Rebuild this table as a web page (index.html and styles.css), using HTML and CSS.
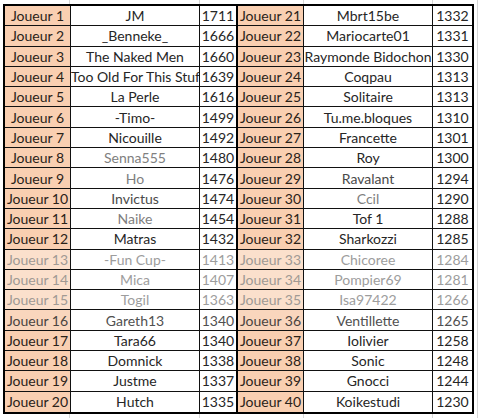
FILE: index.html
```html
<!DOCTYPE html>
<html lang="fr">
<head>
<meta charset="utf-8">
<title>Classement</title>
<link rel="stylesheet" href="styles.css">
</head>
<body>
<div class="page">
  <div class="sheet">
    <div class="block left">
      <div class="row"><div class="cell lbl">Joueur 1</div><div class="cell name">JM</div><div class="cell num">1711</div></div>
      <div class="row"><div class="cell lbl">Joueur 2</div><div class="cell name">_Benneke_</div><div class="cell num">1666</div></div>
      <div class="row"><div class="cell lbl">Joueur 3</div><div class="cell name">The Naked Men</div><div class="cell num">1660</div></div>
      <div class="row"><div class="cell lbl">Joueur 4</div><div class="cell name clip">Too Old For This Stuff</div><div class="cell num">1639</div></div>
      <div class="row"><div class="cell lbl">Joueur 5</div><div class="cell name">La Perle</div><div class="cell num">1616</div></div>
      <div class="row"><div class="cell lbl">Joueur 6</div><div class="cell name">-Timo-</div><div class="cell num">1499</div></div>
      <div class="row"><div class="cell lbl">Joueur 7</div><div class="cell name">Nicouille</div><div class="cell num">1492</div></div>
      <div class="row"><div class="cell lbl">Joueur 8</div><div class="cell name soft">Senna555</div><div class="cell num">1480</div></div>
      <div class="row"><div class="cell lbl">Joueur 9</div><div class="cell name soft">Ho</div><div class="cell num">1476</div></div>
      <div class="row"><div class="cell lbl">Joueur 10</div><div class="cell name mid">Invictus</div><div class="cell num">1474</div></div>
      <div class="row"><div class="cell lbl">Joueur 11</div><div class="cell name soft">Naike</div><div class="cell num">1454</div></div>
      <div class="row"><div class="cell lbl">Joueur 12</div><div class="cell name">Matras</div><div class="cell num">1432</div></div>
      <div class="row fade"><div class="cell lbl">Joueur 13</div><div class="cell name">-Fun Cup-</div><div class="cell num">1413</div></div>
      <div class="row fade"><div class="cell lbl">Joueur 14</div><div class="cell name">Mica</div><div class="cell num">1407</div></div>
      <div class="row fade"><div class="cell lbl">Joueur 15</div><div class="cell name">Togil</div><div class="cell num">1363</div></div>
      <div class="row dim"><div class="cell lbl">Joueur 16</div><div class="cell name">Gareth13</div><div class="cell num">1340</div></div>
      <div class="row"><div class="cell lbl">Joueur 17</div><div class="cell name">Tara66</div><div class="cell num">1340</div></div>
      <div class="row"><div class="cell lbl">Joueur 18</div><div class="cell name">Domnick</div><div class="cell num">1338</div></div>
      <div class="row"><div class="cell lbl">Joueur 19</div><div class="cell name">Justme</div><div class="cell num">1337</div></div>
      <div class="row"><div class="cell lbl">Joueur 20</div><div class="cell name">Hutch</div><div class="cell num">1335</div></div>
    </div>
    <div class="block right">
      <div class="row"><div class="cell lbl">Joueur 21</div><div class="cell name">Mbrt15be</div><div class="cell num">1332</div></div>
      <div class="row"><div class="cell lbl">Joueur 22</div><div class="cell name">Mariocarte01</div><div class="cell num">1331</div></div>
      <div class="row"><div class="cell lbl">Joueur 23</div><div class="cell name">Raymonde Bidochon</div><div class="cell num">1330</div></div>
      <div class="row"><div class="cell lbl">Joueur 24</div><div class="cell name">Coqpau</div><div class="cell num">1313</div></div>
      <div class="row"><div class="cell lbl">Joueur 25</div><div class="cell name">Solitaire</div><div class="cell num">1313</div></div>
      <div class="row"><div class="cell lbl">Joueur 26</div><div class="cell name">Tu.me.bloques</div><div class="cell num">1310</div></div>
      <div class="row"><div class="cell lbl">Joueur 27</div><div class="cell name">Francette</div><div class="cell num">1301</div></div>
      <div class="row"><div class="cell lbl">Joueur 28</div><div class="cell name">Roy</div><div class="cell num">1300</div></div>
      <div class="row"><div class="cell lbl">Joueur 29</div><div class="cell name mid">Ravalant</div><div class="cell num">1294</div></div>
      <div class="row"><div class="cell lbl">Joueur 30</div><div class="cell name soft">Ccil</div><div class="cell num">1290</div></div>
      <div class="row"><div class="cell lbl">Joueur 31</div><div class="cell name">Tof 1</div><div class="cell num">1288</div></div>
      <div class="row"><div class="cell lbl">Joueur 32</div><div class="cell name">Sharkozzi</div><div class="cell num">1285</div></div>
      <div class="row fade"><div class="cell lbl">Joueur 33</div><div class="cell name">Chicoree</div><div class="cell num">1284</div></div>
      <div class="row fade"><div class="cell lbl">Joueur 34</div><div class="cell name">Pompier69</div><div class="cell num">1281</div></div>
      <div class="row fade"><div class="cell lbl">Joueur 35</div><div class="cell name">Isa97422</div><div class="cell num">1266</div></div>
      <div class="row dim"><div class="cell lbl">Joueur 36</div><div class="cell name">Ventillette</div><div class="cell num">1265</div></div>
      <div class="row"><div class="cell lbl">Joueur 37</div><div class="cell name">Iolivier</div><div class="cell num">1258</div></div>
      <div class="row"><div class="cell lbl">Joueur 38</div><div class="cell name">Sonic</div><div class="cell num">1248</div></div>
      <div class="row"><div class="cell lbl">Joueur 39</div><div class="cell name">Gnocci</div><div class="cell num">1244</div></div>
      <div class="row"><div class="cell lbl">Joueur 40</div><div class="cell name">Koikestudi</div><div class="cell num">1230</div></div>
    </div>
  </div>
</div>
</body>
</html>
```

FILE: styles.css
```css
* { box-sizing: border-box; }

html, body {
  margin: 0;
  padding: 0;
  background: #ffffff;
}

body {
  font-family: Lato, "Liberation Sans", sans-serif;
  font-size: 14px;
  color: #262626;
}

.page {
  width: 479px;
  height: 418px;
  padding: 4px 0 0 3px;
  overflow: hidden;
  background-color: #ffffff;
  background-image:
    linear-gradient(#d6d6d6, #d6d6d6),
    linear-gradient(#d6d6d6, #d6d6d6),
    linear-gradient(#d6d6d6, #d6d6d6),
    linear-gradient(#d6d6d6, #d6d6d6),
    linear-gradient(#d6d6d6, #d6d6d6);
  background-size: 1px 100%;
  background-repeat: no-repeat;
  background-position: 69px 0, 199px 0, 303px 0, 432px 0, 477px 0;
}

.sheet {
  display: flex;
  width: 471px;
  border: 2px solid #000;
  background: #ffffff;
}

.block {
  display: grid;
  grid-auto-rows: 20.3px;
}

.left {
  grid-template-columns: 66px 129px 36px;
  border-right: 2px solid #000;
}

.right {
  grid-template-columns: 66px 129px 39px;
}

.row {
  display: contents;
}

.cell {
  display: flex;
  align-items: center;
  justify-content: center;
  padding-top: 1px;
  white-space: nowrap;
  overflow: hidden;
  border-bottom: 1px solid #111;
  line-height: 1;
}

.row:last-child > .cell {
  border-bottom: 0;
}

.lbl {
  background: #f9cfb1;
  border-right: 1px solid #111;
  color: #2a2218;
}

.name {
  border-right: 1px solid #111;
}

.clip {
  justify-content: flex-start;
}

.soft { color: #808080; }
.mid { color: #4a4a4a; }

.fade { color: #9d9d9d; }
.fade > .lbl { background: #fbe0cc; color: #a09a94; }
.dim { color: #505050; }
.dim > .lbl { background: #f9d6bd; color: #4a4440; }
```
